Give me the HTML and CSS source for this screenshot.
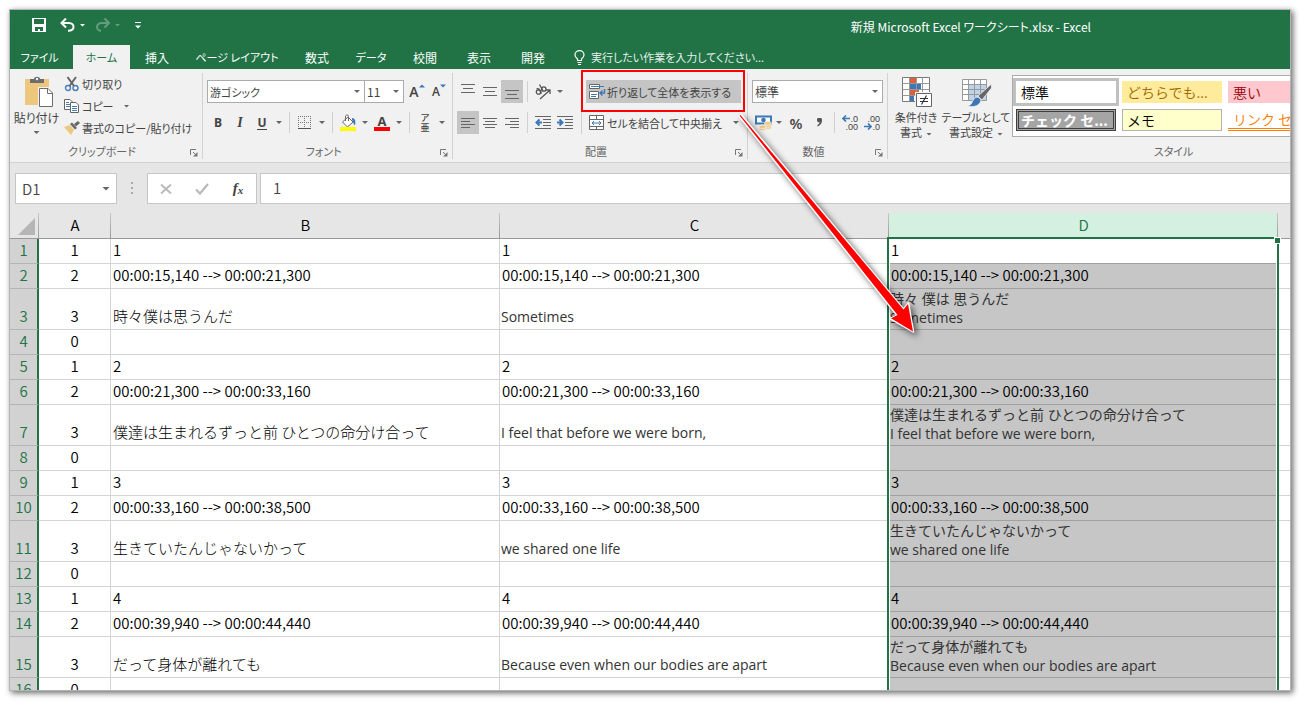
FILE: index.html
```html
<!DOCTYPE html>
<html lang="ja">
<head>
<meta charset="utf-8">
<title>新規 Microsoft Excel ワークシート.xlsx - Excel</title>
<link rel="stylesheet" href="styles.css">
</head>
<body>
<div class="window">
  <header class="titlebar">
    <div class="quick">
      <button class="q-btn q-save" aria-label="上書き保存"><svg width="14" height="14" viewBox="0 0 14 14"><path d="M0 0H14V14H0Z" fill="#fff"/><path d="M2 1H12V6H2ZM3 9H11V13H8V11H6V13H3Z" fill="#217346"/></svg></button>
      <button class="q-btn" aria-label="元に戻す"><svg width="16" height="14" viewBox="0 0 16 14"><path d="M1.500 5H9C12 5 13.500 7 13.500 9C13.500 11.500 11.500 12.800 8 12.800M6 0.500L1.500 5L6 9.500" fill="none" stroke="#fff" stroke-width="2"/></svg></button>
      <button class="q-btn q-arrow" aria-label="元に戻す一覧"><i class="caret light"></i></button>
      <button class="q-btn dim" aria-label="やり直し"><svg width="16" height="14" viewBox="0 0 16 14"><path d="M14 5H7C4 5 2 7 2 9C2 11.500 4 12.800 6 12.800M9.500 0.500L14 5L9.500 9.500" fill="none" stroke="#fff" stroke-width="2"/></svg></button>
      <button class="q-btn q-arrow dim" aria-label="やり直し一覧"><i class="caret light"></i></button>
      <button class="q-btn q-more" aria-label="カスタマイズ"><svg width="6" height="7" viewBox="0 0 6 7"><path d="M0 0H6V1H0ZM0 3.500H6L3 6.500Z" fill="#fff"/></svg></button>
    </div>
    <h1 class="title">新規 Microsoft Excel ワークシート.xlsx - Excel</h1>
  </header>

  <nav class="tabs">
    <button class="tab tab-file kana">ファイル</button>
    <button class="tab tab-active kana">ホーム</button>
    <button class="tab">挿入</button>
    <button class="tab tab-wide kana">ページ レイアウト</button>
    <button class="tab">数式</button>
    <button class="tab kana">データ</button>
    <button class="tab">校閲</button>
    <button class="tab">表示</button>
    <button class="tab">開発</button>
    <button class="tellme kana"><svg width="11" height="15" viewBox="0 0 11 15"><path d="M3.500 10.500V9C2 7.800 1 6.800 1 5A4.500 4.300 0 0 1 10 5C10 6.800 9 7.800 7.500 9V10.500Z M3.500 12.500H7.500M4 14.500H7" fill="none" stroke="#fff" stroke-width="1.200"/></svg>実行したい作業を入力してください...</button>
  </nav>

  <section class="ribbon">
    <div class="group g-clip">
      <div class="g-body">
        <button class="big paste"><svg width="30" height="32" viewBox="0 0 30 32"><path d="M1 3H25V29H1Z" fill="#eec77f"/><path d="M6 7V3H10C10 0 16 0 16 3H20V7Z" fill="#6d6d6d"/><circle cx="13" cy="3" r="1.200" fill="#f1f1f1"/><path d="M14 11H30V32H14Z" fill="#f1f1f1"/><path d="M15.500 12.500H24L28.500 17V30.500H15.500Z" fill="#fff" stroke="#6d6d6d"/><path d="M23.500 12.500V17.500H28.500" fill="none" stroke="#6d6d6d"/></svg><span>貼り付け</span><i class="caret"></i></button>
        <div class="clip-list">
          <button class="line"><svg width="16" height="16" viewBox="0 0 16 16"><path d="M3.500 1L10 10M12 1L5.500 10" stroke="#666" stroke-width="2" fill="none"/><circle cx="4" cy="12" r="2.500" fill="none" stroke="#4a7fb5" stroke-width="1.400"/><circle cx="11.500" cy="12" r="2.500" fill="none" stroke="#4a7fb5" stroke-width="1.400"/></svg><span>切り取り</span></button>
          <button class="line"><svg width="16" height="16" viewBox="0 0 16 16"><path d="M.5 1.500H6L8.500 4V11.500H.5Z" fill="#fff" stroke="#666"/><path d="M2 4.500H5M2 6.500H6M2 8.500H6" stroke="#4a7fb5"/><path d="M6.500 4.500H12L14.500 7V14.500H6.500Z" fill="#fff" stroke="#666"/><path d="M8 8.500H13M8 10.500H13M8 12.500H13" stroke="#4a7fb5"/></svg><span>コピー</span><i class="caret caret-gap"></i></button>
          <button class="line"><svg width="16" height="16" viewBox="0 0 16 16"><path d="M0 7L6 5L10 10L7 15Z" fill="#eec77f"/><path d="M6 4L8 2.500L13 8L11 9.500Z" fill="#666"/><path d="M10 4L14 1L16 3L12 6.500Z" fill="#666"/></svg><span>書式のコピー/貼り付け</span></button>
        </div>
      </div>
      <footer class="g-foot"><span>クリップボード</span><button class="launch" aria-label="クリップボードの詳細"><svg width="8" height="8" viewBox="0 0 8 8"><path d="M.5 6V.5H6M3 3L6 6" fill="none" stroke="#777"/><path d="M7.500 3V7.500H3Z" fill="#777"/></svg></button></footer>
    </div>

    <div class="group g-font">
      <div class="g-body g-rows">
        <div class="row">
          <label class="combo combo-font"><select aria-label="フォント"><option>游ゴシック</option></select><i class="caret"></i></label>
          <label class="combo combo-size"><select aria-label="サイズ"><option>11</option></select><i class="caret"></i></label>
          <button class="ib grow-a" aria-label="拡大"><span>A</span><svg width="6" height="4" viewBox="0 0 6 4"><path d="M0 3.500L3 .5L6 3.500Z" fill="#3b78b5"/></svg></button>
          <button class="ib shrink-a" aria-label="縮小"><span>A</span><svg width="6" height="4" viewBox="0 0 6 4"><path d="M0 .5L3 3.500L6 .5Z" fill="#3b78b5"/></svg></button>
        </div>
        <div class="row">
          <button class="ib bold">B</button>
          <button class="ib ital">I</button>
          <button class="ib under"><span>U</span></button>
          <button class="dd" aria-label="下線"><i class="caret"></i></button>
          <i class="vsep"></i>
          <button class="ib" aria-label="罫線"><svg width="14" height="14" viewBox="0 0 14 14"><path d="M0 .5H13M0 6.500H13M.5 0V12M6.500 0V12M12.500 0V12" stroke="#777" stroke-dasharray="1 1"/><path d="M0 12.500H13" stroke="#555"/></svg></button>
          <button class="dd" aria-label="罫線一覧"><i class="caret"></i></button>
          <i class="vsep"></i>
          <button class="ib" aria-label="塗りつぶし"><svg width="16" height="17" viewBox="0 0 16 17"><path d="M2.500 8L8 3L13 8L7.500 13Z" fill="#fff" stroke="#666"/><path d="M5.500 7V2.500C5.500 .5 8.500 .5 8.500 2.500V7" fill="none" stroke="#666"/><path d="M12 4C15 4 16 7 15 11C13 11 14 8 12 6Z" fill="#3b78b5"/><path d="M0 13H16V17H0Z" fill="#ff0"/></svg></button>
          <button class="dd" aria-label="塗りつぶし一覧"><i class="caret"></i></button>
          <button class="ib fcolor"><span>A</span></button>
          <button class="dd" aria-label="色一覧"><i class="caret"></i></button>
          <i class="vsep"></i>
          <button class="ib ruby"><span>ア</span><span>亜</span></button>
          <button class="dd" aria-label="ふりがな"><i class="caret"></i></button>
        </div>
      </div>
      <footer class="g-foot"><span>フォント</span><button class="launch" aria-label="フォントの詳細"><svg width="8" height="8" viewBox="0 0 8 8"><path d="M.5 6V.5H6M3 3L6 6" fill="none" stroke="#777"/><path d="M7.500 3V7.500H3Z" fill="#777"/></svg></button></footer>
    </div>

    <div class="group g-align">
      <div class="g-body">
        <div class="g-rows">
          <div class="row">
            <button class="ib" aria-label="上揃え"><svg width="14" height="16" viewBox="0 0 14 16"><path d="M0 .5H14M2 4.500H12M0 8.500H14" stroke="#666"/></svg></button>
            <button class="ib" aria-label="上下中央"><svg width="14" height="14" viewBox="0 0 14 14"><path d="M0 2.500H14M2 6.500H12M0 10.500H14" stroke="#666"/></svg></button>
            <button class="ib on" aria-label="下揃え"><svg width="14" height="14" viewBox="0 0 14 14"><path d="M0 5.500H14M2 9.500H12M0 13.500H14" stroke="#666"/></svg></button>
            <i class="vsep"></i>
            <button class="ib" aria-label="方向"><svg width="16" height="16" viewBox="0 0 16 16"><g fill="none" stroke="#555" stroke-width="1.300"><circle cx="3.500" cy="8" r="2.200"/><path d="M1.500 5C4 4 5 6 6.500 9.500"/><circle cx="8.800" cy="5" r="2.200"/><path d="M4.500 .5L8 7"/><path d="M5 15L15 6M15 10V6H11"/></g></svg></button>
            <button class="dd" aria-label="方向一覧"><i class="caret"></i></button>
          </div>
          <div class="row">
            <button class="ib on" aria-label="左揃え"><svg width="14" height="12" viewBox="0 0 14 12"><path d="M0 1.500H14M0 4.500H9M0 7.500H14M0 10.500H9" stroke="#666"/></svg></button>
            <button class="ib" aria-label="中央揃え"><svg width="14" height="12" viewBox="0 0 14 12"><path d="M0 1.500H14M2 4.500H12M0 7.500H14M2 10.500H12" stroke="#666"/></svg></button>
            <button class="ib" aria-label="右揃え"><svg width="14" height="12" viewBox="0 0 14 12"><path d="M0 1.500H14M5 4.500H14M0 7.500H14M5 10.500H14" stroke="#666"/></svg></button>
            <i class="vsep"></i>
            <button class="ib" aria-label="インデントを減らす"><svg width="16" height="13" viewBox="0 0 16 13"><path d="M0 .5H16M8 3.500H16M8 6.500H16M8 9.500H16M0 12.500H16" stroke="#666"/><path d="M2 6.500H7M4.500 3.500L1.500 6.500L4.500 9.500" stroke="#3b78b5" stroke-width="2" fill="none"/></svg></button>
            <button class="ib" aria-label="インデントを増やす"><svg width="16" height="13" viewBox="0 0 16 13"><path d="M0 .5H16M8 3.500H16M8 6.500H16M8 9.500H16M0 12.500H16" stroke="#666"/><path d="M0 6.500H5M2.500 3.500L5.500 6.500L2.500 9.500" stroke="#3b78b5" stroke-width="2" fill="none"/></svg></button>
          </div>
        </div>
        <i class="vsep tall"></i>
        <div class="g-rows merge">
          <button class="wide on"><svg width="17" height="16" viewBox="0 0 17 16"><path d="M.5 .5H10.500V4.500H.5ZM.5 7.500H9.500V14.500H.5Z" fill="#fff" stroke="#666"/><path d="M2 2.500H15M2 10.500H8M2 12.500H7" stroke="#3b78b5"/><path d="M15.500 5V9H11M13.500 6.500L11 9L13.500 11.500" fill="none" stroke="#3b78b5" stroke-width="1.400"/></svg><span>折り返して全体を表示する</span></button>
          <button class="wide"><svg width="17" height="16" viewBox="0 0 17 16"><path d="M.5 .5H14.500V14.500H.5ZM.5 4.500H14.500M.5 11.500H14.500M7.500 .5V4.500M7.500 11.500V14.500" fill="#fff" stroke="#666"/><path d="M3 8H12M5 6L3 8L5 10M10 6L12 8L10 10" fill="none" stroke="#3b78b5"/></svg><span>セルを結合して中央揃え</span><i class="caret caret-end"></i></button>
        </div>
      </div>
      <footer class="g-foot"><span>配置</span><button class="launch" aria-label="配置の詳細"><svg width="8" height="8" viewBox="0 0 8 8"><path d="M.5 6V.5H6M3 3L6 6" fill="none" stroke="#777"/><path d="M7.500 3V7.500H3Z" fill="#777"/></svg></button></footer>
      <div class="callout"></div>
    </div>

    <div class="group g-num">
      <div class="g-body g-rows">
        <div class="row"><label class="combo combo-num"><select aria-label="表示形式"><option>標準</option></select><i class="caret"></i></label></div>
        <div class="row">
          <button class="ib" aria-label="通貨"><svg width="17" height="16" viewBox="0 0 17 16"><path d="M1 1.500H16V8.500H1Z" fill="#fff" stroke="#3b78b5" stroke-width="2"/><circle cx="8.500" cy="5" r="2.300" fill="#3b78b5"/><g fill="#eec77f" stroke="#f1f1f1" stroke-width=".8"><ellipse cx="13" cy="12.500" rx="3.500" ry="1.800"/><ellipse cx="13" cy="10.500" rx="3.500" ry="1.800"/><ellipse cx="13" cy="8.300" rx="3.500" ry="1.800"/><ellipse cx="7.500" cy="13.800" rx="3.500" ry="1.800"/><ellipse cx="7.500" cy="11.800" rx="3.500" ry="1.800"/></g></svg></button>
          <button class="dd" aria-label="通貨一覧"><i class="caret"></i></button>
          <button class="ib pct">%</button>
          <button class="ib" aria-label="桁区切り"><svg width="5" height="9" viewBox="0 0 5 9"><path d="M0 2A2.200 2.200 0 0 1 5 2C5 5 4 7 .5 8.500V7C2 6.200 2.500 5.500 2.500 4.300C1 4.500 0 3.500 0 2Z" fill="#555"/></svg></button>
          <i class="vsep"></i>
          <button class="ib dec"><span><svg width="8" height="7" viewBox="0 0 8 7"><path d="M1 3.500H8M4 .5L1 3.500L4 6.500" fill="none" stroke="#3b78b5" stroke-width="1.600"/></svg>.0</span><span>.00</span></button>
          <button class="ib dec"><span>.00</span><span><svg width="8" height="7" viewBox="0 0 8 7"><path d="M0 3.500H7M4 .5L7 3.500L4 6.500" fill="none" stroke="#3b78b5" stroke-width="1.600"/></svg>.0</span></button>
        </div>
      </div>
      <footer class="g-foot"><span>数値</span><button class="launch" aria-label="数値の詳細"><svg width="8" height="8" viewBox="0 0 8 8"><path d="M.5 6V.5H6M3 3L6 6" fill="none" stroke="#777"/><path d="M7.500 3V7.500H3Z" fill="#777"/></svg></button></footer>
    </div>

    <div class="group g-style">
      <div class="g-body">
        <button class="big cond"><svg width="30" height="32" viewBox="0 0 30 32"><path d="M.5 1.500H27.500V25.500H.5Z" fill="#fff" stroke="#777"/><path d="M8 2H14V7H8ZM8 14H17V19H8Z" fill="#d9613c"/><path d="M8 8H19V13H8ZM8 20H12V25H8Z" fill="#3b78b5"/><path d="M.5 7.500H27.500M.5 13.500H27.500M.5 19.500H27.500M7.500 1.500V25.500M14.500 1.500V25.500M20.500 1.500V25.500" stroke="#999"/><path d="M13 16H30V32H13Z" fill="#f1f1f1"/><path d="M14.500 17.500H29.500V30.500H14.500Z" fill="#fff" stroke="#666"/><path d="M18 22.500H26M18 25.500H26M24.500 19.500L19.500 28.500" stroke="#333" stroke-width="1.200"/></svg><span>条件付き</span><span>書式<i class="caret"></i></span></button>
        <button class="big tabl"><svg width="30" height="32" viewBox="0 0 30 32"><path d="M.5 3.500H24.500V24.500H.5Z" fill="#fff"/><path d="M7 9H24V24H7Z" fill="#bdd3ea"/><path d="M.5 3.500H24.500V24.500H.5ZM.5 8.500H24.500M.5 13.500H24.500M.5 18.500H24.500M6.500 3.500V24.500M12.500 3.500V24.500M18.500 3.500V24.500" fill="none" stroke="#999"/><path d="M29.500 8V12L20 24L16 20Z" fill="#666" stroke="#f1f1f1" stroke-width=".8"/><path d="M6 30C11 29 10 22 15 21C19 22 20 25 17 28C14 31 9 31 6 30Z" fill="#3b78b5" stroke="#f1f1f1" stroke-width=".8"/></svg><span>テーブルとして</span><span>書式設定<i class="caret"></i></span></button>
        <div class="gallery">
          <button class="st st-normal">標準</button>
          <button class="st st-neutral">どちらでも...</button>
          <button class="st st-bad">悪い</button>
          <button class="st st-check">チェック セ...</button>
          <button class="st st-memo">メモ</button>
          <button class="st st-link">リンク セル</button>
        </div>
      </div>
      <footer class="g-foot"><span>スタイル</span></footer>
    </div>
  </section>

  <section class="fbar">
    <label class="namebox"><input type="text" value="D1" aria-label="名前ボックス"><i class="caret"></i></label>
    <i class="dots"></i>
    <div class="fx">
      <button aria-label="キャンセル"><svg width="12" height="12" viewBox="0 0 12 12"><path d="M1 1.500L11 10.500M11 1.500L1 10.500" stroke="#b9b9b9" stroke-width="1.800"/></svg></button>
      <button aria-label="入力"><svg width="14" height="12" viewBox="0 0 14 12"><path d="M1 6.500L5 10.500L13 1" fill="none" stroke="#b9b9b9" stroke-width="2.200"/></svg></button>
      <button class="fx-btn"><span>f</span><small>x</small></button>
    </div>
    <input class="formula" type="text" value="1" aria-label="数式バー">
  </section>

  <main class="sheet">
    <table class="grid">
      <colgroup><col class="c-head"><col class="c-a"><col class="c-text"><col class="c-text"><col class="c-text"><col></colgroup>
      <thead>
        <tr><th class="corner"><svg width="17" height="17" viewBox="0 0 17 17"><path d="M17 0V17H0Z" fill="#b5b5b5"/></svg></th><th>A</th><th>B</th><th>C</th><th class="sel">D</th><th class="rest"></th></tr>
      </thead>
      <tbody>
        <tr><th>1</th><td>1</td><td>1</td><td>1</td><td class="cur">1</td><td></td></tr>
        <tr><th>2</th><td>2</td><td>00:00:15,140 --&gt; 00:00:21,300</td><td>00:00:15,140 --&gt; 00:00:21,300</td><td>00:00:15,140 --&gt; 00:00:21,300</td><td></td></tr>
        <tr class="tall-row"><th>3</th><td>3</td><td class="jp">時々僕は思うんだ</td><td class="en">Sometimes</td><td class="wrap">時々 僕は 思うんだ<br>Sometimes</td><td></td></tr>
        <tr><th>4</th><td>0</td><td></td><td></td><td></td><td></td></tr>
        <tr><th>5</th><td>1</td><td>2</td><td>2</td><td>2</td><td></td></tr>
        <tr><th>6</th><td>2</td><td>00:00:21,300 --&gt; 00:00:33,160</td><td>00:00:21,300 --&gt; 00:00:33,160</td><td>00:00:21,300 --&gt; 00:00:33,160</td><td></td></tr>
        <tr class="tall-row"><th>7</th><td>3</td><td class="jp">僕達は生まれるずっと前 ひとつの命分け合って</td><td class="en">I feel that before we were born,</td><td class="wrap">僕達は生まれるずっと前 ひとつの命分け合って<br>I feel that before we were born,</td><td></td></tr>
        <tr><th>8</th><td>0</td><td></td><td></td><td></td><td></td></tr>
        <tr><th>9</th><td>1</td><td>3</td><td>3</td><td>3</td><td></td></tr>
        <tr><th>10</th><td>2</td><td>00:00:33,160 --&gt; 00:00:38,500</td><td>00:00:33,160 --&gt; 00:00:38,500</td><td>00:00:33,160 --&gt; 00:00:38,500</td><td></td></tr>
        <tr class="tall-row"><th>11</th><td>3</td><td class="jp">生きていたんじゃないかって</td><td class="en">we shared one life</td><td class="wrap">生きていたんじゃないかって<br>we shared one life</td><td></td></tr>
        <tr><th>12</th><td>0</td><td></td><td></td><td></td><td></td></tr>
        <tr><th>13</th><td>1</td><td>4</td><td>4</td><td>4</td><td></td></tr>
        <tr><th>14</th><td>2</td><td>00:00:39,940 --&gt; 00:00:44,440</td><td>00:00:39,940 --&gt; 00:00:44,440</td><td>00:00:39,940 --&gt; 00:00:44,440</td><td></td></tr>
        <tr class="tall-row"><th>15</th><td>3</td><td class="jp">だって身体が離れても</td><td class="en">Because even when our bodies are apart</td><td class="wrap">だって身体が離れても<br>Because even when our bodies are apart</td><td></td></tr>
        <tr><th>16</th><td>0</td><td></td><td></td><td></td><td></td></tr>
      </tbody>
    </table>
    <div class="selection"><i class="handle"></i></div>
  </main>
  <svg class="pointer" width="190" height="235" viewBox="730 105 190 235"><path d="M739 116L741 114.500L903.500 309L908.500 303L913.500 332L890 318.500L897 315.500Z" fill="#fff" stroke="#fff" stroke-width="1.600" stroke-linejoin="round"/><path d="M739.500 115.500L740.500 115L903.500 309.500L908 304L913 331.500L891 318.300L897.500 315Z" fill="#f00"/></svg>
</div>
</body>
</html>
```
FILE: styles.css
```css
* { box-sizing: border-box; }
body {
  margin: 0;
  padding: 10px;
  height: 100vh;
  overflow: hidden;
  background: #fff;
  font-family: "Noto Sans CJK JP", sans-serif;
  font-size: 12px;
  color: #444;
}
button, input, select {
  font: inherit;
  color: inherit;
  border: 0;
  padding: 0;
  margin: 0;
  background: none;
  border-radius: 0;
}
button { display: flex; align-items: center; justify-content: center; white-space: nowrap; }
svg { display: block; flex: none; }

.window {
  position: relative;
  height: calc(100vh - 21px);
  display: flex;
  flex-direction: column;
  overflow: hidden;
  background: #fff;
}
body::before {
  content: "";
  position: absolute;
  inset: 10px 10px 11px;
  box-shadow: 0 0 0 1px #b4b4b4, 2px 2px 6px 1px rgba(0, 0, 0, .6);
}

.titlebar, .tabs { background: #217346; color: #fff; display: flex; flex: none; font-feature-settings: "palt"; }
.titlebar { height: 35px; justify-content: space-between; align-items: flex-start; padding: 0 199px 0 22px; }
.title { margin: 0; font-size: 12px; font-weight: 400; line-height: 34px; }
.quick { display: flex; align-items: center; height: 30px; }
.q-save { margin-right: 14px; }
.q-arrow { width: 13px; margin-right: 6px; }
.q-more { margin-left: 5px; }
.dim { opacity: .3; }
.caret {
  display: inline-block;
  flex: none;
  width: 6px;
  height: 3px;
  background: #666;
  clip-path: polygon(0 0, 100% 0, 50% 100%);
}
.caret.light { background: #fff; }

.tabs { height: 24px; }
.tab { min-width: 54px; }
.tab-file { min-width: 63px; padding-right: 4px; }
.tab-active { min-width: 57px; background: #f1f1f1; color: #217346; }
.tab-wide { min-width: 106px; }
.tellme { margin-left: 14px; gap: 6px; color: #e4f1ea; }
.kana { font-size: 11px; }

.ribbon {
  display: flex;
  flex: none;
  height: 94px;
  padding: 4px 0 3px;
  background: #f1f1f1;
  border-bottom: 1px solid #d2d2d2;
  font-size: 11px;
  font-feature-settings: "palt";
}
.group { position: relative; flex: none; display: flex; flex-direction: column; border-right: 1px solid #d2d2d2; }
.g-clip { width: 193px; }
.g-font { width: 250px; }
.g-align { width: 295px; }
.g-num { width: 140px; }
.g-style { width: 572px; }
.g-body { display: flex; height: 73px; }
.g-rows { display: flex; flex-direction: column; gap: 8px; padding: 7px 4px 0; }
.g-foot { display: flex; align-items: center; height: 15px; color: #666; padding: 0 4px; }
.g-foot span { flex: 1; text-align: center; line-height: 15px; }
.launch { width: 8px; height: 8px; margin-top: 3px; }

.big { flex-direction: column; justify-content: flex-start; padding-top: 3px; line-height: 15px; }
.big svg { margin-bottom: 2px; }
.big .caret { margin-left: 4px; vertical-align: middle; }
.paste { width: 53px; font-size: 12px; }
.paste svg { margin-left: 4px; }
.paste > .caret { margin: 6px 0 0; }
.clip-list { display: flex; flex-direction: column; }
.line { height: 22px; gap: 2px; justify-content: flex-start; padding-left: 1px; }
.caret-gap { margin-left: 8px; }

.row { display: flex; align-items: center; height: 23px; }
.combo { position: relative; flex: none; display: flex; align-items: center; height: 23px; background: #fff; border: 1px solid #ababab; }
.combo select { appearance: none; flex: 1; min-width: 0; height: 21px; padding: 0 14px 0 2px; outline: none; }
.combo .caret { position: absolute; right: 4px; }
.combo-font { width: 158px; }
.combo-size { width: 39px; border-left: 0; margin-right: 2px; font-size: 12px; }
.combo-num { width: 131px; font-size: 12px; }

.ib { flex: none; width: 22px; height: 23px; color: #444; }
.on { background: #c5c5c5; }
.dd { width: 12px; height: 23px; }
.vsep { flex: none; width: 1px; height: 21px; margin: 0 4px; background: #d0d0d0; }
.tall { height: 54px; margin: 7px 0 0 1px; }
.grow-a, .shrink-a { align-items: center; font-family: "Open Sans", sans-serif; font-weight: 600; }
.grow-a { font-size: 14px; }
.shrink-a { font-size: 12px; }
.grow-a svg, .shrink-a svg { align-self: flex-start; margin-top: 4px; }
.bold, .ital, .under, .fcolor { font-family: "Open Sans", sans-serif; font-size: 12px; font-weight: 700; }
.ital { font-family: "Liberation Serif", serif; font-style: italic; font-size: 14px; }
.under span { border-bottom: 1px solid #444; line-height: 13px; }
.fcolor span { width: 16px; line-height: 12px; border-bottom: 4px solid #f00; font-size: 13px; }
.ruby { flex-direction: column; font-size: 9px; line-height: 10px; font-weight: 500; }
.pct { font-family: "Open Sans", sans-serif; font-size: 15px; font-weight: 600; width: 24px; }
.dec { flex-direction: column; align-items: flex-end; padding-right: 3px; font-family: "Liberation Sans", sans-serif; font-size: 9px; line-height: 8px; }
.dec span { display: flex; align-items: center; }
.merge { padding: 7px 0 0 4px; width: 159px; }
.wide { height: 23px; gap: 1px; padding-left: 3px; justify-content: flex-start; }
.caret-end { margin-left: 10px; }
.callout { position: absolute; left: 128px; top: -3px; width: 164px; height: 42px; border: 2px solid #f00; z-index: 2; }

.cond { width: 56px; }
.tabl { width: 64px; }
.cond svg, .tabl svg { margin-left: 2px; }
.gallery {
  display: grid;
  grid-template-columns: repeat(3, 100px);
  grid-auto-rows: 22px;
  gap: 6px;
  flex: none;
  width: 440px;
  height: 62px;
  margin: 2px 0 0 4px;
  padding: 5px 3px;
  background: #fff;
  border: 1px solid #ababab;
}
.st { justify-content: flex-start; padding-left: 5px; font-size: 14px; color: #000; font-feature-settings: normal; }
.st-normal { outline: 3px solid #c0c0c0; }
.st-neutral { background: #ffeb9c; color: #9c6500; }
.st-bad { background: #ffc7ce; color: #9c0006; }
.st-check { background: #a5a5a5; color: #fff; border: 3px double #3f3f3f; padding-left: 2px; font-weight: 700; }
.st-memo { background: #ffc; border: 1px solid #b2b2b2; padding-left: 4px; }
.st-link { color: #fa7d00; border-bottom: 3px double #ff8001; }
.st-normal, .st-neutral, .st-bad, .st-memo, .st-link { font-weight: 350; }

.fbar { display: flex; flex: none; padding: 10px 0 9px 5px; height: 50px; background: #e6e6e6; font-size: 15px; font-weight: 350; }
.namebox { display: flex; align-items: center; width: 102px; background: #fff; border: 1px solid #c6c6c6; padding: 0 6px; }
.namebox input { flex: 1; min-width: 0; outline: none; }
.namebox .caret { width: 8px; height: 4px; }
.dots { width: 2px; height: 12px; margin: 9px 14px 0; background: repeating-linear-gradient(#aaa 0 2px, transparent 2px 5px); }
.fx { display: flex; width: 110px; background: #fff; border: 1px solid #c6c6c6; }
.fx button { flex: 1; }
.fx-btn { font-family: "Liberation Serif", serif; font-style: italic; font-weight: 700; }
.fx-btn small { font-size: 11px; padding-top: 3px; }
.formula { flex: 1; min-width: 0; margin-left: 3px; padding: 0 12px 2px; background: #fff; border: 1px solid #c6c6c6; border-right: 0; outline: none; }

.sheet { position: relative; flex: 1; min-height: 0; overflow: hidden; background: #fff; }
.grid { width: 100%; table-layout: fixed; border-collapse: separate; border-spacing: 0; font-size: 15px; font-weight: 350; color: #000; }
.c-head { width: 29px; }
.c-a { width: 72px; }
.c-text { width: 389px; }
.grid th, .grid td { padding: 0 0 2px; height: 25px; line-height: 22px; vertical-align: bottom; white-space: nowrap; overflow: hidden; }
.grid th { font-weight: 350; text-align: center; }
.grid thead th {
  height: 26px;
  background: linear-gradient(#c8c8c8, #999) right / 1px 100% no-repeat #e6e6e6;
  border-bottom: 1px solid #999;
}
.grid thead .sel { background-color: #d3f0e0; color: #217346; }
.grid thead .rest { background: #e6e6e6; }
.corner svg { margin: 0 0 1px 8px; }
.grid tbody th { background: #d2d2d2; color: #217346; border-bottom: 1px solid #b4b4b4; border-right: 2px solid #217346; }
.grid td { border-right: 1px solid #d4d4d4; border-bottom: 1px solid #d4d4d4; padding-left: 2px; }
.grid td:nth-child(2) { text-align: center; padding-left: 0; }
.grid td:nth-child(5) { background: #c6c6c6; border-bottom-color: #a0a0a0; }
.grid td:nth-child(6) { border-right: 0; }
.grid td.cur { background: #fff; }
.grid td.jp { font-weight: 300; }
.grid .tall-row td, .grid .tall-row th { height: 41px; }
.grid td.en { font-family: "Open Sans", sans-serif; font-size: 14px; font-weight: 400; color: #333; line-height: 24px; padding: 0 0 0 1px; }
.grid td.wrap { font-family: "Open Sans", "Noto Sans CJK JP", sans-serif; font-size: 14px; font-weight: 400; line-height: 19px; color: #333; padding: 0 0 2px 1px; }
.selection {
  position: absolute;
  left: 877px;
  top: 24px;
  bottom: -4px;
  width: 392px;
  border: 2px solid #217346;
  box-shadow: inset 0 0 0 1px #fff;
}
.handle { position: absolute; right: -3px; top: -1px; width: 5px; height: 5px; background: #217346; outline: 1px solid #fff; }
.pointer { position: absolute; left: 720px; top: 95px; z-index: 3; filter: drop-shadow(3px 3px 3px rgba(0, 0, 0, .6)); pointer-events: none; }
```
